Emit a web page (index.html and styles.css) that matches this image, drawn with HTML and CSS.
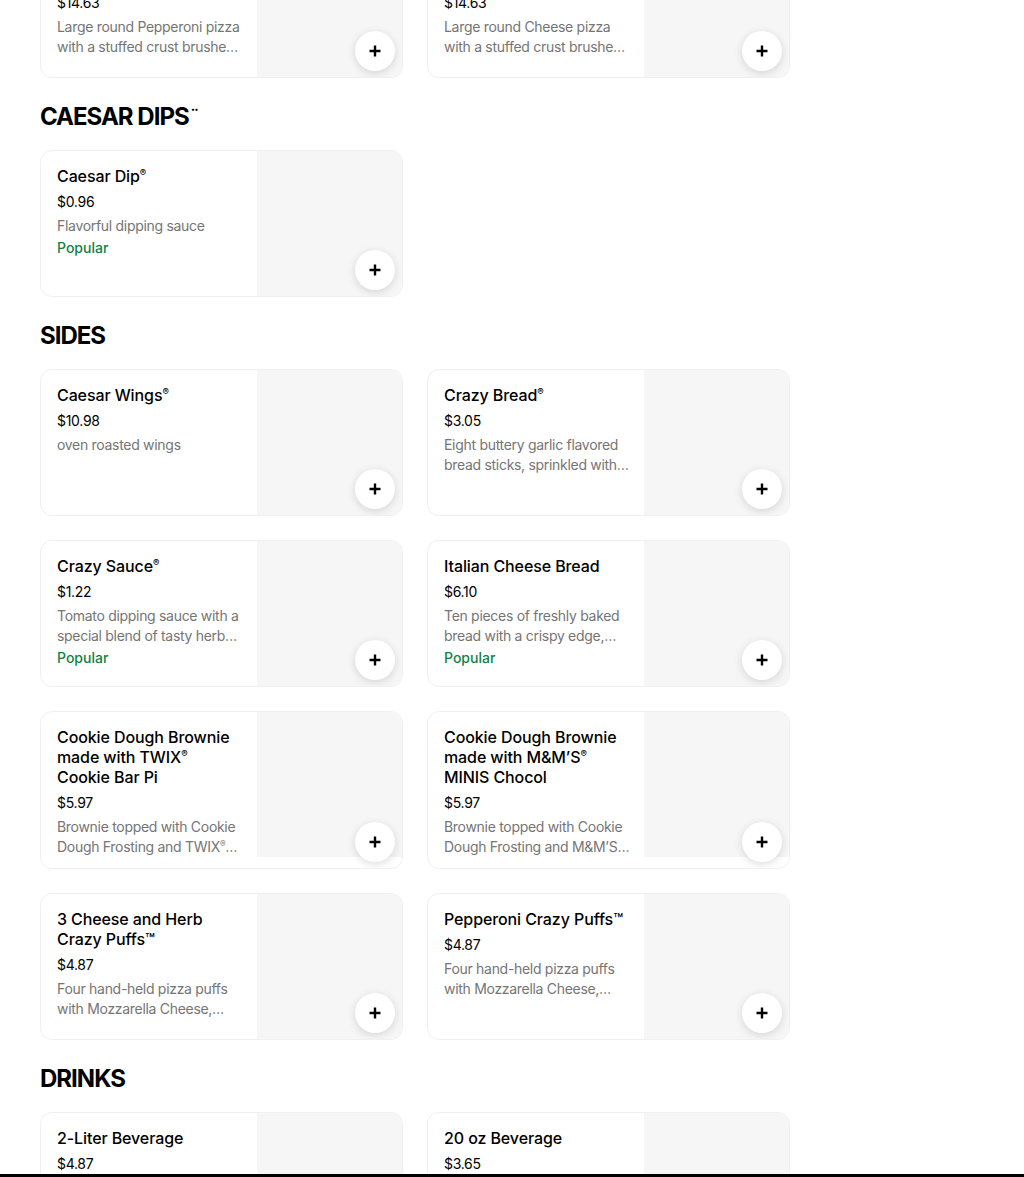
FILE: index.html
```html
<!DOCTYPE html>
<html lang="en">
<head>
<meta charset="utf-8">
<title>Menu</title>
<link rel="stylesheet" href="styles.css">
</head>
<body>
<main class="menu">
  <section class="section">
    <div class="grid">
      <div class="card">
        <div class="info">
          <div class="title">Stuffed Crust Pepperoni Pizza</div>
          <div class="price">$14.63</div>
          <div class="desc">Large round Pepperoni pizza with a stuffed crust brushed with garlic butter and parmesan</div>
        </div>
        <div class="thumb"></div>
        <button class="add" aria-label="Add"><svg viewBox="0 0 16 16" width="16" height="16"><path d="M8 2.5v11M2.5 8h11" stroke="#000" stroke-width="2.4" fill="none"/></svg></button>
      </div>
      <div class="card">
        <div class="info">
          <div class="title">Stuffed Crust Cheese Pizza</div>
          <div class="price">$14.63</div>
          <div class="desc">Large round Cheese pizza with a stuffed crust brushed with garlic butter and parmesan</div>
        </div>
        <div class="thumb"></div>
        <button class="add" aria-label="Add"><svg viewBox="0 0 16 16" width="16" height="16"><path d="M8 2.5v11M2.5 8h11" stroke="#000" stroke-width="2.4" fill="none"/></svg></button>
      </div>
    </div>
  </section>

  <section class="section">
    <h2 class="heading">CAESAR DIPS<span class="mark">¨</span></h2>
    <div class="grid">
      <div class="card">
        <div class="info">
          <div class="title">Caesar Dip<span class="reg">®</span></div>
          <div class="price">$0.96</div>
          <div class="desc">Flavorful dipping sauce</div>
          <div class="popular">Popular</div>
        </div>
        <div class="thumb"></div>
        <button class="add" aria-label="Add"><svg viewBox="0 0 16 16" width="16" height="16"><path d="M8 2.5v11M2.5 8h11" stroke="#000" stroke-width="2.4" fill="none"/></svg></button>
      </div>
    </div>
  </section>

  <section class="section">
    <h2 class="heading">SIDES</h2>
    <div class="grid">
      <div class="card">
        <div class="info">
          <div class="title">Caesar Wings<span class="reg">®</span></div>
          <div class="price">$10.98</div>
          <div class="desc">oven roasted wings</div>
        </div>
        <div class="thumb"></div>
        <button class="add" aria-label="Add"><svg viewBox="0 0 16 16" width="16" height="16"><path d="M8 2.5v11M2.5 8h11" stroke="#000" stroke-width="2.4" fill="none"/></svg></button>
      </div>
      <div class="card">
        <div class="info">
          <div class="title">Crazy Bread<span class="reg">®</span></div>
          <div class="price">$3.05</div>
          <div class="desc">Eight buttery garlic flavored bread sticks, sprinkled with parmesan cheese</div>
        </div>
        <div class="thumb"></div>
        <button class="add" aria-label="Add"><svg viewBox="0 0 16 16" width="16" height="16"><path d="M8 2.5v11M2.5 8h11" stroke="#000" stroke-width="2.4" fill="none"/></svg></button>
      </div>
      <div class="card">
        <div class="info">
          <div class="title">Crazy Sauce<span class="reg">®</span></div>
          <div class="price">$1.22</div>
          <div class="desc">Tomato dipping sauce with a special blend of tasty herbs and spices</div>
          <div class="popular">Popular</div>
        </div>
        <div class="thumb"></div>
        <button class="add" aria-label="Add"><svg viewBox="0 0 16 16" width="16" height="16"><path d="M8 2.5v11M2.5 8h11" stroke="#000" stroke-width="2.4" fill="none"/></svg></button>
      </div>
      <div class="card">
        <div class="info">
          <div class="title">Italian Cheese Bread</div>
          <div class="price">$6.10</div>
          <div class="desc">Ten pieces of freshly baked bread with a crispy edge, topped with cheese</div>
          <div class="popular">Popular</div>
        </div>
        <div class="thumb"></div>
        <button class="add" aria-label="Add"><svg viewBox="0 0 16 16" width="16" height="16"><path d="M8 2.5v11M2.5 8h11" stroke="#000" stroke-width="2.4" fill="none"/></svg></button>
      </div>
      <div class="card">
        <div class="info">
          <div class="title">Cookie Dough Brownie made with TWIX<span class="reg">®</span> Cookie Bar Pi</div>
          <div class="price">$5.97</div>
          <div class="desc">Brownie topped with Cookie Dough Frosting and TWIX<span class="reg">®</span> Cookie Bar pieces</div>
        </div>
        <div class="thumb"></div>
        <button class="add" aria-label="Add"><svg viewBox="0 0 16 16" width="16" height="16"><path d="M8 2.5v11M2.5 8h11" stroke="#000" stroke-width="2.4" fill="none"/></svg></button>
      </div>
      <div class="card">
        <div class="info">
          <div class="title">Cookie Dough Brownie made with M&amp;M’S<span class="reg">®</span> MINIS Chocol</div>
          <div class="price">$5.97</div>
          <div class="desc">Brownie topped with Cookie Dough Frosting and M&amp;M’S<span class="reg">®</span> MINIS</div>
        </div>
        <div class="thumb"></div>
        <button class="add" aria-label="Add"><svg viewBox="0 0 16 16" width="16" height="16"><path d="M8 2.5v11M2.5 8h11" stroke="#000" stroke-width="2.4" fill="none"/></svg></button>
      </div>
      <div class="card">
        <div class="info">
          <div class="title">3 Cheese and Herb Crazy Puffs™</div>
          <div class="price">$4.87</div>
          <div class="desc">Four hand-held pizza puffs with Mozzarella Cheese, Muenster and herbs</div>
        </div>
        <div class="thumb"></div>
        <button class="add" aria-label="Add"><svg viewBox="0 0 16 16" width="16" height="16"><path d="M8 2.5v11M2.5 8h11" stroke="#000" stroke-width="2.4" fill="none"/></svg></button>
      </div>
      <div class="card">
        <div class="info">
          <div class="title">Pepperoni Crazy Puffs™</div>
          <div class="price">$4.87</div>
          <div class="desc">Four hand-held pizza puffs with Mozzarella Cheese, pepperoni and herbs</div>
        </div>
        <div class="thumb"></div>
        <button class="add" aria-label="Add"><svg viewBox="0 0 16 16" width="16" height="16"><path d="M8 2.5v11M2.5 8h11" stroke="#000" stroke-width="2.4" fill="none"/></svg></button>
      </div>
    </div>
  </section>

  <section class="section">
    <h2 class="heading">DRINKS</h2>
    <div class="grid">
      <div class="card">
        <div class="info">
          <div class="title">2-Liter Beverage</div>
          <div class="price">$4.87</div>
          <div class="desc">Two liter bottle of your favorite soft drink</div>
        </div>
        <div class="thumb"></div>
        <button class="add" aria-label="Add"><svg viewBox="0 0 16 16" width="16" height="16"><path d="M8 2.5v11M2.5 8h11" stroke="#000" stroke-width="2.4" fill="none"/></svg></button>
      </div>
      <div class="card">
        <div class="info">
          <div class="title">20 oz Beverage</div>
          <div class="price">$3.65</div>
          <div class="desc">Twenty ounce bottle of your favorite soft drink</div>
        </div>
        <div class="thumb"></div>
        <button class="add" aria-label="Add"><svg viewBox="0 0 16 16" width="16" height="16"><path d="M8 2.5v11M2.5 8h11" stroke="#000" stroke-width="2.4" fill="none"/></svg></button>
      </div>
    </div>
  </section>
</main>
<div class="bottom-bar"></div>
</body>
</html>
```

FILE: styles.css
```css
* { box-sizing: border-box; }

body {
  margin: 0;
  background: #fff;
  color: #000;
  font-family: Inter, "Noto Sans", "Liberation Sans", sans-serif;
}

.menu {
  width: 830px;
  padding: 0 40px;
  margin-top: -69px;
}

.heading {
  margin: 23px 0 17px;
  height: 32px;
  font-size: 24px;
  line-height: 32px;
  font-weight: 700;
  letter-spacing: -1px;
}

.mark {
  font-size: 16px;
  line-height: 0;
  position: relative;
  top: -4px;
  margin-left: 1px;
  letter-spacing: 0;
}

.grid {
  display: grid;
  grid-template-columns: 363px 363px;
  gap: 24px;
}

.card {
  position: relative;
  display: grid;
  grid-template-columns: 1fr 145px;
  align-items: start;
  border: 1px solid #f0f0f0;
  border-radius: 12px;
  overflow: hidden;
  background: #fff;
}

.info {
  padding: 15px 14px 11px 16px;
  min-width: 0;
}

.title {
  font-size: 16px;
  line-height: 20px;
  font-weight: 500;
  letter-spacing: -0.1px;
}

.reg {
  font-size: 0.6em;
  line-height: 0;
  position: relative;
  top: -0.6em;
}

.price {
  margin-top: 6px;
  font-size: 14px;
  line-height: 20px;
  letter-spacing: -0.3px;
}

.desc {
  margin-top: 4px;
  font-size: 14px;
  line-height: 20px;
  letter-spacing: -0.3px;
  color: #757575;
  display: -webkit-box;
  -webkit-line-clamp: 2;
  -webkit-box-orient: vertical;
  overflow: hidden;
}

.popular {
  margin-top: 2px;
  font-size: 14px;
  line-height: 20px;
  font-weight: 500;
  color: #0e8345;
}

.thumb {
  height: 145px;
  background: #f6f6f6;
}

.add {
  position: absolute;
  right: 7px;
  bottom: 6px;
  width: 40px;
  height: 40px;
  padding: 0;
  border: none;
  border-radius: 50%;
  background: #fff;
  box-shadow: 0 2px 8px rgba(0, 0, 0, 0.14);
  display: flex;
  align-items: center;
  justify-content: center;
}

.bottom-bar {
  position: fixed;
  left: 0;
  right: 0;
  bottom: 0;
  height: 3px;
  background: #000;
}
```
